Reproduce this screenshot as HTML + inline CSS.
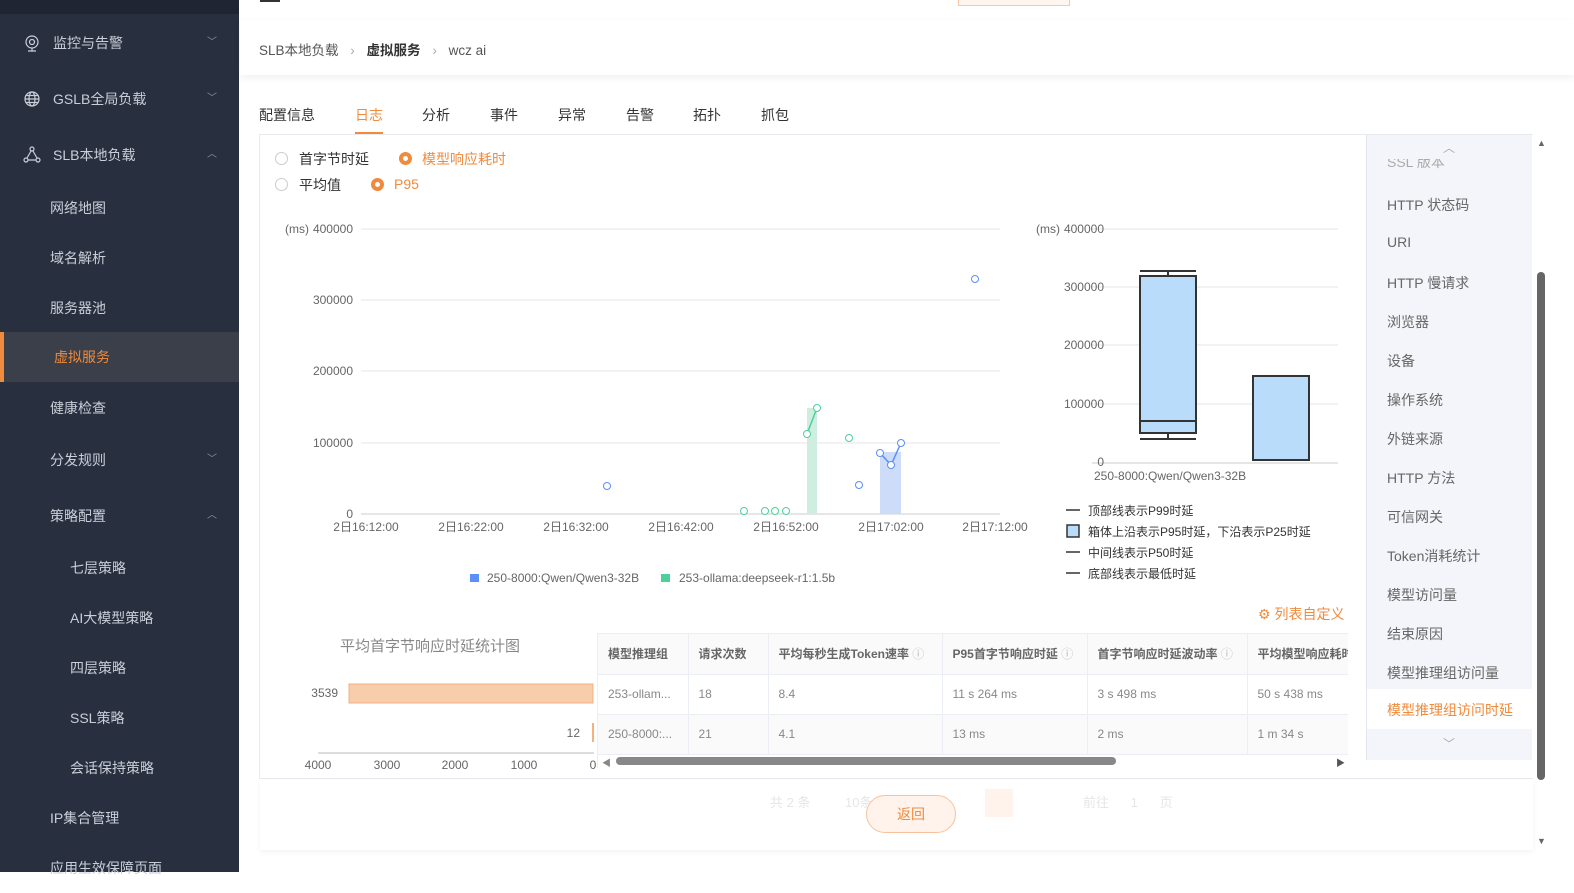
<!DOCTYPE html>
<html><head><meta charset="utf-8">
<style>
*{margin:0;padding:0;box-sizing:border-box}
body{width:1574px;height:872px;overflow:hidden;background:#fff;font-family:"Liberation Sans","Noto Sans CJK SC",sans-serif;position:relative;color:#333}
.side{position:absolute;left:0;top:0;width:239px;height:872px;background:#283040;color:#c9ced8;font-size:14px}
.side .top{height:14px;background:#1f2531}
.mi{position:absolute;left:0;width:239px;height:50px;line-height:50px}
.mi span.t{position:absolute}
.arr{position:absolute;right:22px;top:0;font-size:10px;color:#8a93a3}
.act{background:#3a3f49;border-left:4px solid #f08a3c;color:#f08a3c}
.a{position:absolute;font-size:14px}
.tab{position:absolute;top:105px;font-size:14px;color:#333}
.rp{position:absolute;left:1366px;top:135px;width:166px;height:625px;background:#f3f5fa;border-left:1px solid #e4e7ed;font-size:14px;color:#666}
.rp div{position:absolute;left:20px}
th,td{font-size:12px;text-align:left;padding-left:10px;border-right:1px solid #ebeef5;border-bottom:1px solid #ebeef5;white-space:nowrap;overflow:hidden}
th{color:#666;height:40px;background:#fafafa;font-weight:bold}
td{color:#888;height:40px}
</style></head><body>
<div class="side">
<div class="top"></div>
<div class="mi" style="top:18px"><svg style="position:absolute;left:24px;top:17px" width="16" height="17" viewBox="0 0 16 17" fill="none" stroke="#c9ced8" stroke-width="1.2"><circle cx="8" cy="7" r="6"/><circle cx="8" cy="7" r="2.5"/><path d="M4 16h8M8 13v3"/></svg><span class="t" style="left:53px">监控与告警</span><span class="arr">﹀</span></div>
<div class="mi" style="top:74px"><svg style="position:absolute;left:24px;top:17px" width="16" height="16" viewBox="0 0 16 16" fill="none" stroke="#c9ced8" stroke-width="1.2"><circle cx="8" cy="8" r="7"/><ellipse cx="8" cy="8" rx="3" ry="7"/><path d="M1 8h14M2 4.5h12M2 11.5h12"/></svg><span class="t" style="left:53px">GSLB全局负载</span><span class="arr">﹀</span></div>
<div class="mi" style="top:130px"><svg style="position:absolute;left:23px;top:16px" width="18" height="17" viewBox="0 0 18 17" fill="none" stroke="#c9ced8" stroke-width="1.2"><circle cx="9" cy="3" r="2"/><circle cx="3" cy="14" r="2"/><circle cx="15" cy="14" r="2"/><path d="M8 5l-4 7M10 5l4 7M5 14h8"/></svg><span class="t" style="left:53px">SLB本地负载</span><span class="arr">︿</span></div>
<div class="mi" style="top:183px"><span class="t" style="left:50px">网络地图</span></div>
<div class="mi" style="top:233px"><span class="t" style="left:50px">域名解析</span></div>
<div class="mi" style="top:283px"><span class="t" style="left:50px">服务器池</span></div>
<div class="mi act" style="top:332px"><span class="t" style="left:50px">虚拟服务</span></div>
<div class="mi" style="top:383px"><span class="t" style="left:50px">健康检查</span></div>
<div class="mi" style="top:435px"><span class="t" style="left:50px">分发规则</span><span class="arr">﹀</span></div>
<div class="mi" style="top:491px"><span class="t" style="left:50px">策略配置</span><span class="arr">︿</span></div>
<div class="mi" style="top:543px"><span class="t" style="left:70px">七层策略</span></div>
<div class="mi" style="top:593px"><span class="t" style="left:70px">AI大模型策略</span></div>
<div class="mi" style="top:643px"><span class="t" style="left:70px">四层策略</span></div>
<div class="mi" style="top:693px"><span class="t" style="left:70px">SSL策略</span></div>
<div class="mi" style="top:743px"><span class="t" style="left:70px">会话保持策略</span></div>
<div class="mi" style="top:793px"><span class="t" style="left:50px">IP集合管理</span></div>
<div class="mi" style="top:843px"><span class="t" style="left:50px">应用生效保障页面</span></div>
</div>
<div style="position:absolute;left:260px;top:0;width:20px;height:2px;background:#333"></div>
<div style="position:absolute;left:958px;top:0;width:112px;height:6px;border:1px solid #f5c9a8;border-top:none;background:#fff6ef"></div>
<div style="position:absolute;left:240px;top:20px;width:1334px;height:55px;background:#fff;box-shadow:0 3px 8px rgba(0,0,0,.06)"></div>
<div class="a" style="left:259px;top:39px;font-size:13.5px;color:#555">SLB本地负载 <span style="color:#aaa;margin:0 8px">›</span> <b style="color:#333">虚拟服务</b> <span style="color:#aaa;margin:0 8px">›</span> wcz ai</div>
<div class="tab" style="left:259px">配置信息</div>
<div class="tab" style="left:355px;color:#f08a3c">日志</div>
<div style="position:absolute;left:355px;top:132px;width:28px;height:2px;background:#f08a3c"></div>
<div class="tab" style="left:422px">分析</div><div class="tab" style="left:490px">事件</div><div class="tab" style="left:558px">异常</div><div class="tab" style="left:626px">告警</div><div class="tab" style="left:693px">拓扑</div><div class="tab" style="left:761px">抓包</div>
<div style="position:absolute;left:259px;top:134px;width:1274px;height:645px;border:1px solid #e8eaef;border-right:none"></div>
<div style="position:absolute;left:275px;top:152px;width:13px;height:13px;border:1px solid #ccc;border-radius:50%"></div>
<div class="a" style="left:299px;top:149px;color:#333">首字节时延</div>
<div style="position:absolute;left:399px;top:152px;width:13px;height:13px;border:4px solid #f08a3c;border-radius:50%;background:#fff"></div>
<div class="a" style="left:422px;top:149px;color:#f08a3c">模型响应耗时</div>
<div style="position:absolute;left:275px;top:178px;width:13px;height:13px;border:1px solid #ccc;border-radius:50%"></div>
<div class="a" style="left:299px;top:175px;color:#333">平均值</div>
<div style="position:absolute;left:371px;top:178px;width:13px;height:13px;border:4px solid #f08a3c;border-radius:50%;background:#fff"></div>
<div class="a" style="left:394px;top:176px;color:#f08a3c">P95</div>
<svg style="position:absolute;left:0;top:0" width="1574" height="872" font-family="Liberation Sans,Noto Sans CJK SC,sans-serif" font-size="12" fill="#666">
<g stroke="#e6e6e6"><line x1="361" y1="229" x2="1000" y2="229"/><line x1="361" y1="300" x2="1000" y2="300"/><line x1="361" y1="371" x2="1000" y2="371"/><line x1="361" y1="443" x2="1000" y2="443"/></g>
<line x1="361" y1="514" x2="1000" y2="514" stroke="#ccc"/>
<g text-anchor="end"><text x="353" y="233">400000</text><text x="353" y="304">300000</text><text x="353" y="375">200000</text><text x="353" y="447">100000</text><text x="353" y="518">0</text></g>
<text x="285" y="233">(ms)</text>
<g text-anchor="middle"><text x="366" y="531">2日16:12:00</text><text x="471" y="531">2日16:22:00</text><text x="576" y="531">2日16:32:00</text><text x="681" y="531">2日16:42:00</text><text x="786" y="531">2日16:52:00</text><text x="891" y="531">2日17:02:00</text><text x="995" y="531">2日17:12:00</text></g>
<rect x="807" y="408" width="10" height="106" fill="#cdeee0"/>
<rect x="880" y="452" width="21" height="62" fill="#cddcf8"/>
<polyline points="807,434 817,408" stroke="#4cd19a" stroke-width="1.5" fill="none"/>
<polyline points="880,453 891,465 901,443" stroke="#5b8ff9" stroke-width="1.5" fill="none"/>
<g fill="#fff" stroke="#4cd19a"><circle cx="807" cy="434" r="3.5"/><circle cx="817" cy="408" r="3.5"/><circle cx="849" cy="438" r="3.5"/><circle cx="744" cy="511" r="3.5"/><circle cx="765" cy="511" r="3.5"/><circle cx="775" cy="511" r="3.5"/><circle cx="786" cy="511" r="3.5"/></g>
<g fill="#fff" stroke="#5b8ff9"><circle cx="607" cy="486" r="3.5"/><circle cx="975" cy="279" r="3.5"/><circle cx="859" cy="485" r="3.5"/><circle cx="880" cy="453" r="3.5"/><circle cx="891" cy="465" r="3.5"/><circle cx="901" cy="443" r="3.5"/></g>
<rect x="470" y="574" width="9" height="8" fill="#5b8ff9"/><text x="487" y="582">250-8000:Qwen/Qwen3-32B</text>
<rect x="661" y="574" width="9" height="8" fill="#4cd19a"/><text x="679" y="582">253-ollama:deepseek-r1:1.5b</text>
<g stroke="#e6e6e6"><line x1="1092" y1="229" x2="1338" y2="229"/><line x1="1092" y1="287" x2="1338" y2="287"/><line x1="1092" y1="345" x2="1338" y2="345"/><line x1="1092" y1="404" x2="1338" y2="404"/></g>
<line x1="1092" y1="463" x2="1338" y2="463" stroke="#ccc"/>
<g text-anchor="end"><text x="1104" y="233">400000</text><text x="1104" y="291">300000</text><text x="1104" y="349">200000</text><text x="1104" y="408">100000</text><text x="1104" y="466">0</text></g>
<text x="1036" y="233">(ms)</text>
<text x="1094" y="480">250-8000:Qwen/Qwen3-32B</text>
<g stroke="#333" stroke-width="2"><rect x="1140" y="276" width="56" height="157" fill="#b8dcf9"/><line x1="1140" y1="271" x2="1196" y2="271"/><line x1="1140" y1="439" x2="1196" y2="439"/><line x1="1140" y1="421" x2="1196" y2="421"/><line x1="1168" y1="271" x2="1168" y2="276"/><line x1="1168" y1="433" x2="1168" y2="439"/>
<rect x="1253" y="376" width="56" height="84" fill="#b8dcf9"/></g>
<g stroke="#333" stroke-width="1.5"><line x1="1066" y1="510" x2="1080" y2="510"/><rect x="1067" y="525" width="12" height="12" fill="#b8dcf9"/><line x1="1066" y1="552" x2="1080" y2="552"/><line x1="1066" y1="573" x2="1080" y2="573"/></g>
<g fill="#333"><text x="1088" y="515">顶部线表示P99时延</text><text x="1088" y="536">箱体上沿表示P95时延，下沿表示P25时延</text><text x="1088" y="557">中间线表示P50时延</text><text x="1088" y="578">底部线表示最低时延</text></g>
<text x="340" y="651" font-size="15" fill="#888">平均首字节响应时延统计图</text>
<rect x="349" y="684" width="244" height="19" fill="#f8cdac" stroke="#f5b07d"/>
<rect x="592" y="723" width="2" height="19" fill="#f5b07d"/>
<text x="338" y="697" text-anchor="end">3539</text><text x="580" y="737" text-anchor="end">12</text>
<line x1="318" y1="753" x2="594" y2="753" stroke="#ddd" stroke-width="2"/>
<g text-anchor="middle"><text x="318" y="769">4000</text><text x="387" y="769">3000</text><text x="455" y="769">2000</text><text x="524" y="769">1000</text><text x="593" y="769">0</text></g>
</svg>
<div class="a" style="left:1258px;top:604px;color:#f08a3c">⚙ 列表自定义</div>
<div style="position:absolute;left:597px;top:633px;width:751px;height:135px;overflow:hidden;border-top:1px solid #ebeef5;border-left:1px solid #ebeef5">
<table style="border-collapse:collapse;table-layout:fixed;width:900px">
<colgroup><col style="width:90px"><col style="width:80px"><col style="width:174px"><col style="width:145px"><col style="width:160px"><col style="width:251px"></colgroup>
<tr><th>模型推理组</th><th>请求次数</th><th>平均每秒生成Token速率 <span style="color:#ccc">ⓘ</span></th><th>P95首字节响应时延 <span style="color:#ccc">ⓘ</span></th><th>首字节响应时延波动率 <span style="color:#ccc">ⓘ</span></th><th>平均模型响应耗时</th></tr>
<tr><td>253-ollam...</td><td>18</td><td>8.4</td><td>11 s 264 ms</td><td>3 s 498 ms</td><td>50 s 438 ms</td></tr>
<tr style="background:#fafafa"><td>250-8000:...</td><td>21</td><td>4.1</td><td>13 ms</td><td>2 ms</td><td>1 m 34 s</td></tr>
</table>
<div style="position:absolute;left:18px;top:123px;width:500px;height:8px;border-radius:4px;background:#888"></div>
<div style="position:absolute;left:4px;top:122px;font-size:9px;color:#888">◀</div>
<div style="position:absolute;left:738px;top:122px;font-size:9px;color:#555">▶</div>
</div>
<div style="position:absolute;left:260px;top:780px;width:1273px;height:70px;background:#fff;box-shadow:0 2px 6px rgba(0,0,0,.05)"></div>
<div class="a" style="left:770px;top:792px;color:#e6e6e6;font-size:13px">共 2 条</div>
<div class="a" style="left:845px;top:792px;color:#e6e6e6;font-size:13px">10条/页</div>
<div class="a" style="left:1083px;top:792px;color:#e6e6e6;font-size:13px">前往 &nbsp;&nbsp;&nbsp;&nbsp; 1 &nbsp;&nbsp;&nbsp;&nbsp; 页</div>
<div style="position:absolute;left:985px;top:789px;width:28px;height:28px;background:#fff3eb"></div>
<div style="position:absolute;left:866px;top:795px;width:90px;height:38px;border:1px solid #f5c3a0;border-radius:19px;background:#fff3eb;color:#f08a3c;font-size:14px;text-align:center;line-height:36px">返回</div>
<div class="rp">
<div style="left:76px;top:4px;color:#aaa;font-size:12px">︿</div>
<div style="top:24px;color:#aaa;height:12px;overflow:hidden;line-height:6px">SSL 版本</div>
<div style="top:60px">HTTP 状态码</div><div style="top:99px">URI</div><div style="top:138px">HTTP 慢请求</div><div style="top:177px">浏览器</div><div style="top:216px">设备</div><div style="top:255px">操作系统</div><div style="top:294px">外链来源</div><div style="top:333px">HTTP 方法</div><div style="top:372px">可信网关</div><div style="top:411px">Token消耗统计</div><div style="top:450px">模型访问量</div><div style="top:489px">结束原因</div><div style="top:528px">模型推理组访问量</div>
<div style="left:0;top:554px;width:166px;height:40px;background:#fff"></div>
<div style="top:565px;color:#f08a3c">模型推理组访问时延</div>
<div style="left:76px;top:600px;color:#aaa;font-size:12px">﹀</div>
</div>
<div style="position:absolute;left:1537px;top:138px;color:#666;font-size:9px">▲</div>
<div style="position:absolute;left:1537px;top:272px;width:8px;height:508px;border-radius:4px;background:#666"></div>
<div style="position:absolute;left:1537px;top:836px;color:#666;font-size:9px">▼</div>
</body></html>
